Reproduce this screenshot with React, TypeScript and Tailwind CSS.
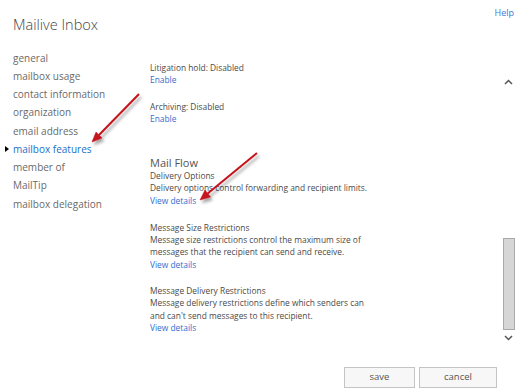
const navItems = [
  'general',
  'mailbox usage',
  'contact information',
  'organization',
  'email address',
  'mailbox features',
  'member of',
  'MailTip',
  'mailbox delegation',
];

function Chevron({ up }: { up?: boolean }) {
  return (
    <svg width="9" height="6" viewBox="0 0 9 6" className="block">
      <path
        d={up ? 'M1 5 L4.5 1.5 L8 5' : 'M1 1 L4.5 4.5 L8 1'}
        fill="none"
        stroke="#555"
        strokeWidth="1.5"
      />
    </svg>
  );
}

function Arrows() {
  return (
    <svg width="520" height="390" className="absolute inset-0 pointer-events-none">
      <defs>
        <filter id="sh" x="-20%" y="-20%" width="140%" height="140%">
          <feDropShadow dx="2" dy="3" stdDeviation="1.4" floodColor="#000" floodOpacity="0.35" />
        </filter>
      </defs>
      <g filter="url(#sh)" fill="#c4121a" stroke="#c4121a">
        <line x1="139" y1="94" x2="99" y2="135" strokeWidth="2" />
        <polygon points="92,142 102,138 96,132" strokeWidth="0.5" />
        <line x1="257" y1="153" x2="207.7" y2="193.6" strokeWidth="2" />
        <polygon points="200,200 210.5,197 205,190" strokeWidth="0.5" />
      </g>
    </svg>
  );
}

export default function App() {
  return (
    <div
      className="relative w-[520px] h-[390px] bg-white overflow-hidden flex flex-col"
      style={{ fontFamily: '"Open Sans", "Noto Sans", sans-serif' }}
    >
      <div className="flex justify-between h-[36px]">
        <h1 className="pl-[13px] pt-[14px] text-[14.5px] leading-[22px] font-light text-[#444]">Mailive Inbox</h1>
        <a className="pt-[6px] pr-[6px] text-[9px] leading-[13px] text-[#3b78d8]">Help</a>
      </div>

      <div className="flex flex-1">
        <ul className="w-[150px] pt-[13px] pl-[4px]">
          {navItems.map(item => {
            const active = item === 'mailbox features';
            return (
              <li key={item} className="flex items-center h-[18.25px]">
                <span className="w-[9px] flex">
                  {active && (
                    <span className="w-0 h-0 border-y-[3px] border-y-transparent border-l-[4px] border-l-black ml-[1px]" />
                  )}
                </span>
                <span className={`text-[10px] whitespace-nowrap ${active ? 'text-[#1a6fc9]' : 'text-[#6a6a6a]'}`}>
                  {item}
                </span>
              </li>
            );
          })}
        </ul>

        <div className="flex-1 pt-[25.75px] text-[8.4px] leading-[12.4px] text-[#4a4a4a]">
          <div>Litigation hold: Disabled</div>
          <a className="block text-[#2f6fcf]">Enable</a>

          <div className="mt-[14.5px]">Archiving: Disabled</div>
          <a className="block text-[#2f6fcf]">Enable</a>

          <div className="mt-[30px] text-[11px] leading-[14px] text-[#555]">Mail Flow</div>
          <div>Delivery Options</div>
          <div>Delivery options control forwarding and recipient limits.</div>
          <a className="block text-[#2f6fcf]">View details</a>

          <div className="mt-[14.5px]">Message Size Restrictions</div>
          <div>Message size restrictions control the maximum size of</div>
          <div>messages that the recipient can send and receive.</div>
          <a className="block text-[#2f6fcf]">View details</a>

          <div className="mt-[13.5px]">Message Delivery Restrictions</div>
          <div>Message delivery restrictions define which senders can</div>
          <div>and can't send messages to this recipient.</div>
          <a className="block text-[#2f6fcf]">View details</a>
        </div>

        <div className="w-[17px] mr-[3px] flex flex-col items-center pt-[43px]">
          <Chevron up />
          <div className="mt-[153px] w-[12px] h-[92px] bg-[#d6d6d6] border border-[#a9a9a9]" />
          <div className="mt-[5px]">
            <Chevron />
          </div>
        </div>
      </div>

      <div className="flex justify-end gap-[4px] pr-[23px] pb-[2px]">
        <button className="w-[71px] h-[21px] border border-[#c4c4c4] bg-[#f7f7f7] text-[9.5px] text-[#555]">save</button>
        <button className="w-[78px] h-[21px] border border-[#c4c4c4] bg-[#f7f7f7] text-[9.5px] text-[#555]">cancel</button>
      </div>

      <Arrows />
    </div>
  );
}
